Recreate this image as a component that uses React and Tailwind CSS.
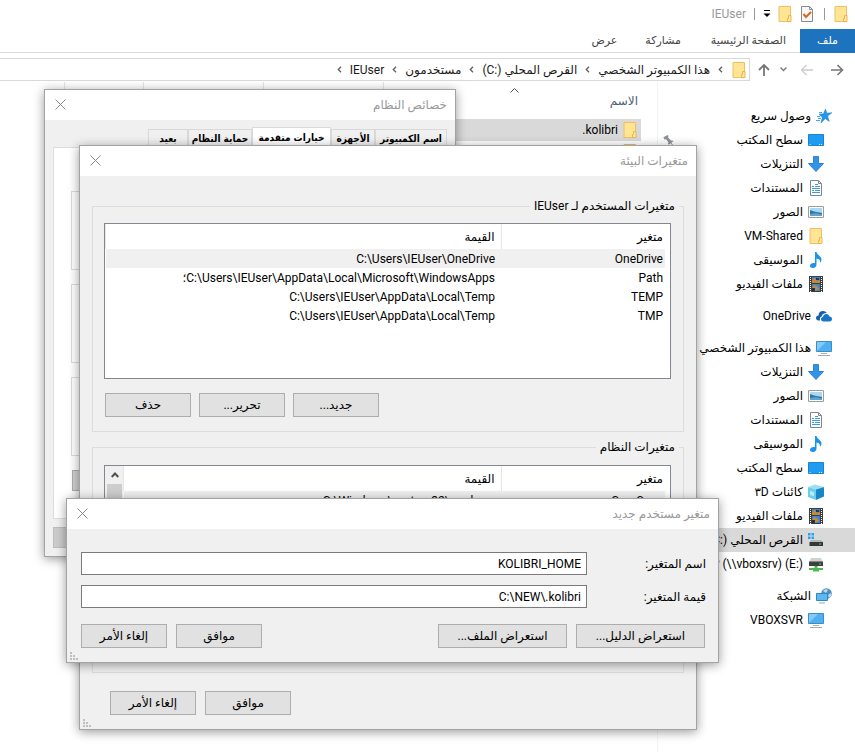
import React from "react";

const Folder = () => (
  <svg width="16" height="16" viewBox="0 0 16 16" className="shrink-0">
    <path d="M2 .5h11.5v15H2z" fill="#ffe594" stroke="#f0bf63" />
    <path d="M11.5 9.5h2.5v6h-3.5v-3h1z" fill="#ffe9a2" stroke="#eeb54f" />
  </svg>
);
const Star = () => (
  <svg width="16" height="16" viewBox="0 0 16 16" className="shrink-0">
    <path d="M9.500 1l1.300 4.200 5-.4-4.200 3.300 1.600 5.400L9.300 10.500 5 15l1.300-5.500L3 6.300l4.500-.6z" fill="#2196ec" stroke="#2b86d0" strokeWidth=".6" />
    <path d="M1 8.500h3M2 10.500h3M0 12.500h4M3 4.500h3" stroke="#4aa5e8" />
  </svg>
);
const Desktop = () => (
  <svg width="16" height="16" viewBox="0 0 16 16" className="shrink-0">
    <path d="M.5 2.500h15v11H.5z" fill="#1f9bf0" stroke="#1a82d2" />
    <path d="M1.500 12.500h1M11 12.500h1M13 12.500h1" stroke="#d5edfd" />
  </svg>
);
const Down = () => (
  <svg width="16" height="16" viewBox="0 0 16 16" className="shrink-0">
    <path d="M5.500.5h5v7h5L8 15.500.5 7.500h5z" fill="#3393e4" stroke="#2b83d3" />
  </svg>
);
const Doc = () => (
  <svg width="16" height="16" viewBox="0 0 16 16" className="shrink-0">
    <path d="M2.500.5h8l3 3v12h-11z" fill="#fff" stroke="#7d8791" />
    <path d="M10.500.5v3h3" fill="none" stroke="#7d8791" />
    <path d="M7 4.500h3M4 6.500h2M7 6.500h5M4 8.500h8M4 10.500h2M7 10.500h5M4 12.500h8" stroke="#3c98dc" />
  </svg>
);
const Picture = () => (
  <svg width="16" height="16" viewBox="0 0 16 16" className="shrink-0">
    <path d="M.5 2.500h15v11H.5z" fill="#fff" stroke="#9a9da0" />
    <path d="M2 4h12v8H2z" fill="#a9d8f5" />
    <path d="M2 6l4 1.500L14 9v3H2z" fill="#35749b" />
    <path d="M2 10l6-1 6 1.500V12H2z" fill="#5aa5d0" />
  </svg>
);
const Music = () => (
  <svg width="16" height="16" viewBox="0 0 16 16" className="shrink-0">
    <path d="M7 0h1.500c.5 3 5 4 5 7.500 0 1.500-.7 2.500-1.500 3.300.3-2.800-1-3.800-3.500-4.300v6C8.500 14.500 7 16 5 16s-3-1-3-2.300C2 12 4 10.700 7 11z" fill="#1b94ea" />
  </svg>
);
const Film = () => (
  <svg width="16" height="16" viewBox="0 0 16 16" className="shrink-0">
    <path d="M1 0h14v16H1z" fill="#3c3c3c" />
    <path d="M2.500 1v15M13.500 1v15" stroke="#fff" strokeDasharray="1 1" />
    <path d="M4 1h8v6H4zM4 8h8v7H4z" fill="#3d86d2" />
    <path d="M4 4l3-2 2 3 3-1v3H4zM6 9l3 1 2 3-4 2-3-2z" fill="#c98a35" />
    <path d="M8 2h3v2H8zM4 12h3v3H4z" fill="#22354f" />
  </svg>
);
const Cloud = () => (
  <svg width="16" height="16" viewBox="0 0 16 16" className="shrink-0">
    <path d="M4 12.500H2.500C1 12.500 0 11.500 0 10s1-2.500 2.500-2.600C2.500 4.500 4.500 3 7 3c1.700 0 3 .8 3.800 2C7.500 5 6 6.500 5.600 8.500 4 9 3.500 10.500 4 12.500z" fill="#1460ab" />
    <path d="M7.500 13.500C6 13.500 5 12.600 5 11.300s1-2 2-2.200C7.200 7.200 8.600 6 10.300 6c1.600 0 2.700 1 3.100 2.500C15 8.600 16 9.700 16 11s-1 2.500-2.400 2.500z" fill="#1a74c6" />
  </svg>
);
const Computer = () => (
  <svg width="16" height="16" viewBox="0 0 16 16" className="shrink-0">
    <path d="M.5 1.500h15v10H.5z" fill="#4fb0f1" stroke="#3c8dc6" />
    <path d="M1 11V2h9z" fill="#84caf8" />
    <path d="M5 13.500h6M2 15.500h12" stroke="#a3abb1" />
  </svg>
);
const Cube = () => (
  <svg width="16" height="16" viewBox="0 0 16 16" className="shrink-0">
    <path d="M0 3l7-2.500L16 3l-8 2.500z" fill="#9be0f3" />
    <path d="M0 3l8 2.500V16l-8-3z" fill="#6acdea" />
    <path d="M8 5.500L16 3v9.500L8 16z" fill="#1987c7" />
    <path d="M2 7l4 1v4l-4-1z" fill="#b8ecf8" />
  </svg>
);
const Drive = () => (
  <svg width="16" height="16" viewBox="0 0 16 16" className="shrink-0">
    <path d="M0 1h2.500v2.500H0zM3.500 1H6v2.500H3.500zM0 4.500h2.500V7H0zM3.500 4.500H6V7H3.500z" fill="#27a3ee" />
    <path d="M3 8h10l2 2H1.500z" fill="#b4b7b9" />
    <path d="M1.500 10H15v4H1.500z" fill="#353838" />
    <path d="M11 12h2" stroke="#55d65b" />
  </svg>
);
const NetDrive = () => (
  <svg width="16" height="16" viewBox="0 0 16 16" className="shrink-0">
    <path d="M3 2h10l2 4H1z" fill="#cfd2d3" />
    <path d="M1 5.500h14V10H1z" fill="#3c3f3f" />
    <path d="M11 8h2" stroke="#55d65b" />
    <path d="M6.500 10h3v2H15v2h-4v1.500H5V14H1v-2h5.500z" fill="#4fb853" />
  </svg>
);
const Network = () => (
  <svg width="16" height="16" viewBox="0 0 16 16" className="shrink-0">
    <circle cx="10.500" cy="5.500" r="5.300" fill="#4d92bd" />
    <path d="M7 3c2-2 4-2 5-1l-2 3zM12 7l3-2v3l-2 2z" fill="#bcdcec" />
    <path d="M.5 5.500h11v7H.5z" fill="#5cb7f3" stroke="#2f86c6" />
    <path d="M3 15h6" stroke="#a3abb1" />
  </svg>
);
const Pin = () => (
  <svg width="12" height="12" viewBox="0 0 12 12" className="shrink-0">
    <path d="M1 4l4-3 1 1-.3 1.500L9 6l1.500-.2 1 .8-4 4-1-1 .2-1.500L4 5.500 2.500 6z" fill="#8d9297" transform="rotate(8 6 6)" />
    <path d="M8 8l3 3.500" stroke="#8d9297" />
  </svg>
);
const Crumb = () => (
  <svg width="5" height="7" viewBox="0 0 5 7" className="shrink-0">
    <path d="M4 .8L1.300 3.500 4 6.200" fill="none" stroke="#5f5f5f" strokeWidth="1.300" />
  </svg>
);

const places = [
  { icon: Star, text: "وصول سريع", top: true },
  { icon: Desktop, text: "سطح المكتب", pin: true },
  { icon: Down, text: "التنزيلات" },
  { icon: Doc, text: "المستندات" },
  { icon: Picture, text: "الصور" },
  { icon: Folder, text: "VM-Shared" },
  { icon: Music, text: "الموسيقى" },
  { icon: Film, text: "ملفات الفيديو" },
  { icon: Cloud, text: "OneDrive", top: true, gap: true },
  { icon: Computer, text: "هذا الكمبيوتر الشخصي", top: true, gap: true },
  { icon: Down, text: "التنزيلات" },
  { icon: Picture, text: "الصور" },
  { icon: Doc, text: "المستندات" },
  { icon: Music, text: "الموسيقى" },
  { icon: Desktop, text: "سطح المكتب" },
  { icon: Cube, text: "كائنات ٣D" },
  { icon: Film, text: "ملفات الفيديو" },
  { icon: Drive, text: "القرص المحلي", ltr: "(C:)", active: true },
  { icon: NetDrive, ltr: "P (\\\\vboxsrv) (E:)" },
  { icon: Network, text: "الشبكة", top: true, gap: true },
  { icon: Computer, text: "VBOXSVR" },
];

function Sidebar() {
  return (
    <nav className="w-[198px] shrink-0 border-l border-[#f3f3f3] pt-[22px]">
      <ul>
        {places.map((p, i) => (
          <li key={i} className={p.gap ? "mt-2" : ""}>
            <a
              href="#"
              className={`flex h-6 items-center gap-[5px] whitespace-nowrap ${p.top ? "pr-[23px]" : "pr-[31px]"} ${p.active ? "bg-[#d9d9d9]" : ""}`}
            >
              <p.icon />
              <span>
                {p.text} {p.ltr && <bdi dir="ltr">{p.ltr}</bdi>}
              </span>
              {p.pin && (
                <span className="mr-auto pl-1">
                  <Pin />
                </span>
              )}
            </a>
          </li>
        ))}
      </ul>
    </nav>
  );
}

function Explorer() {
  return (
    <div className="flex min-h-screen flex-col">
      <header>
        <div className="flex h-[29px] items-center pr-[6px] pb-px text-[#999]">
          <Folder />
          <span className="mx-2 h-3 w-px bg-[#9a9a9a]" />
          <button aria-label="خصائص" className="mr-px">
            <svg width="16" height="16" viewBox="0 0 16 16">
              <path d="M2.500.5h8l3 3v12h-11z" fill="#f7f7f7" stroke="#8a8a8a" />
              <path d="M10.500.5v3h3" fill="none" stroke="#8a8a8a" />
              <path d="M4.500 8l2.500 3 5-5" fill="none" stroke="#d2691e" strokeWidth="2" />
            </svg>
          </button>
          <button aria-label="مجلد جديد" className="mr-[6px]">
            <Folder />
          </button>
          <button aria-label="تخصيص" className="mr-[6px]">
            <svg width="8" height="8" viewBox="0 0 8 8">
              <path d="M1 .5h6" stroke="#000" />
              <path d="M.5 3.500h7L4 7z" fill="#000" />
            </svg>
          </button>
          <span className="mx-2 h-3 w-px bg-[#9a9a9a]" />
          <span>IEUser</span>
        </div>
        <div className="flex h-6 items-center border-b border-[#dadbdc] text-[11px] text-[#444]">
          <button className="h-6 w-[55px] bg-[#1e73be] text-white">ملف</button>
          <button className="mr-[14px]">الصفحة الرئيسية</button>
          <button className="mr-[30px]">مشاركة</button>
          <button className="mr-[28px]">عرض</button>
        </div>
        <div className="mt-[5px] flex h-[23px] items-center">
          <div className="flex w-[105px] shrink-0 items-center gap-[10px] pr-[11px]">
            <button aria-label="الخلف">
              <svg width="14" height="12" viewBox="0 0 14 12">
                <path d="M1 6h11M7.500 1l5 5-5 5" fill="none" stroke="#777" strokeWidth="1.600" />
              </svg>
            </button>
            <button aria-label="الأمام" className="mr-[6px]">
              <svg width="14" height="12" viewBox="0 0 14 12">
                <path d="M13 6H2M6.500 1l-5 5 5 5" fill="none" stroke="#ccc" strokeWidth="1.300" />
              </svg>
            </button>
            <button aria-label="المواقع الأخيرة" className="mr-[3px]">
              <svg width="7" height="5" viewBox="0 0 7 5">
                <path d="M.5.5l3 3 3-3" fill="none" stroke="#777" strokeWidth="1.300" />
              </svg>
            </button>
            <button aria-label="أعلى">
              <svg width="12" height="13" viewBox="0 0 12 13">
                <path d="M6 13V2M1 7l5-5 5 5" fill="none" stroke="#777" strokeWidth="1.800" />
              </svg>
            </button>
          </div>
          <div className="flex h-[23px] grow items-center gap-2 border-y border-r border-[#d9d9d9] pr-[2px] whitespace-nowrap text-[#1a1a1a]">
            <Folder />
            <Crumb />
            <a href="#">هذا الكمبيوتر الشخصي</a>
            <Crumb />
            <a href="#">
              القرص المحلي <bdi dir="ltr">(C:)</bdi>
            </a>
            <Crumb />
            <a href="#">مستخدمون</a>
            <Crumb />
            <a href="#">IEUser</a>
            <Crumb />
          </div>
        </div>
      </header>
      <div className="mt-px flex grow">
        <Sidebar />
        <main className="w-[593px] pr-4">
          <div className="flex h-[37px] text-[#4c607a]">
            <div className="flex w-[257px] flex-col pr-[3px]">
              <svg width="9" height="5" viewBox="0 0 9 5" className="mt-[6px] mr-[119px]">
                <path d="M.5 4.500l4-4 4 4" fill="none" stroke="#555" />
              </svg>
              <span className="leading-4">الاسم</span>
            </div>
            <div className="w-[120px] border-r border-[#e5e5e5]" />
            <div className="w-[120px] border-r border-[#e5e5e5]" />
            <div className="w-20 border-x border-[#e5e5e5]" />
          </div>
          <div className="flex h-[22px] items-center gap-1 bg-[#d9d9d9] pr-[3px]">
            <Folder />
            <bdi dir="ltr">.kolibri</bdi>
          </div>
          <div className="flex h-[22px] items-center pr-[3px]">
            <Folder />
          </div>
        </main>
      </div>
    </div>
  );
}

function Dialog({ title, className, children, grip }) {
  return (
    <section
      role="dialog"
      aria-label={title}
      className={`absolute flex flex-col border border-[#a3a3a3] bg-[#f0f0f0] shadow-[0_2px_10px_rgba(0,0,0,0.4)] ${className}`}
    >
      <div className="flex h-[30px] shrink-0 items-center justify-between bg-white pr-2 pb-px pl-[10px] text-[#999]">
        <h2>{title}</h2>
        <button aria-label="إغلاق">
          <svg width="11" height="11" viewBox="0 0 11 11">
            <path d="M.5.5l10 10M10.500.5l-10 10" stroke="#8b8b8b" />
          </svg>
        </button>
      </div>
      {children}
      {grip && (
        <svg width="8" height="8" viewBox="0 0 8 8" className="absolute bottom-[2px] left-[3px]">
          <path d="M0 0h2v2H0zM0 3h2v2H0zM3 3h2v2H3zM0 6h2v2H0zM3 6h2v2H3zM6 6h2v2H6z" fill="#bfbfbf" />
        </svg>
      )}
    </section>
  );
}

function Btn({ children, wide }) {
  return (
    <button className={`h-6 border border-[#adadad] bg-[#e1e1e1] ${wide ? "w-[129px]" : "w-[86px]"}`}>
      {children}
    </button>
  );
}

function VarTable({ rows, scroll }) {
  return (
    <div className="flex grow overflow-hidden border border-[#828790] bg-white pr-[5px]">
      <table className="w-full table-fixed self-start">
        <thead>
          <tr className="h-[25px]">
            <th className="w-[164px] border-l border-[#e5e5e5] pr-[2px] text-right font-normal">متغير</th>
            <th className="border-l border-[#e5e5e5] pr-[6px] text-right font-normal">القيمة</th>
          </tr>
        </thead>
        <tbody>
          {rows.map(([name, value], i) => (
            <tr key={name} className={`h-[19px] ${i === 0 ? "bg-[#f0f0f0]" : ""}`}>
              <td className="p-0 pr-[2px] leading-4">{name}</td>
              <td className="p-0 pr-[6px] leading-4">{value}</td>
            </tr>
          ))}
        </tbody>
      </table>
      {scroll && (
        <div className="flex w-[18px] shrink-0 flex-col bg-[#f0f0f0] pr-px pl-[2px]">
          <button aria-label="تمرير لأعلى" className="flex h-[18px] shrink-0 items-center justify-center">
            <svg width="8" height="6" viewBox="0 0 8 6">
              <path d="M.7 5L4 1.500 7.300 5" fill="none" stroke="#505050" strokeWidth="2" />
            </svg>
          </button>
          <div className="h-20 bg-[#cdcdcd]" />
        </div>
      )}
    </div>
  );
}

const userVars = [
  ["OneDrive", "C:\\Users\\IEUser\\OneDrive"],
  ["Path", "C:\\Users\\IEUser\\AppData\\Local\\Microsoft\\WindowsApps؛"],
  ["TEMP", "C:\\Users\\IEUser\\AppData\\Local\\Temp"],
  ["TMP", "C:\\Users\\IEUser\\AppData\\Local\\Temp"],
];
const systemVars = [["ComSpec", "C:\\Windows\\system32\\cmd.exe"]];
const tabs = [
  ["اسم الكمبيوتر", "w-[72px]"],
  ["الأجهزة", "w-[44px]"],
  ["خيارات متقدمة", "w-[79px]"],
  ["حماية النظام", "w-[64px]"],
  ["بعيد", "w-[40px]"],
];

export default function App() {
  return (
    <div
      dir="rtl"
      className="relative min-h-screen overflow-hidden bg-white font-['Roboto','DejaVu_Sans',sans-serif] text-[12px] leading-4 text-black"
    >
      <Explorer />

      <Dialog title="خصائص النظام" className="top-[89px] right-[399px] h-[468px] w-[412px]">
        <div className="flex grow flex-col px-2 pt-[7px] pb-2">
          <div role="tablist" className="flex h-5 items-end font-['DejaVu_Sans_Condensed','DejaVu_Sans',sans-serif] text-[10px] font-bold">
            {tabs.map(([t, w], i) => (
              <button
                key={t}
                role="tab"
                aria-selected={i === 2}
                className={`border border-b-0 border-[#d9d9d9] whitespace-nowrap ${w} ${i === 2 ? "h-5 bg-white" : "h-[18px]"}`}
              >
                {t}
              </button>
            ))}
          </div>
          <div className="flex grow flex-col gap-[14px] border border-[#dcdcdc] bg-white px-[17px] pt-[43px]">
            <div className="h-[79px] border border-[#dcdcdc]" />
            <div className="h-[79px] border border-[#dcdcdc]" />
            <div className="h-[79px] border border-[#dcdcdc]" />
            <div className="flex h-[21px] justify-end pl-px">
              <button aria-label="متغيرات البيئة" className="w-32 border border-[#adadad] bg-[#d0d0d0]" />
            </div>
            <div className="h-[13px]" />
          </div>
          <div className="mt-2 flex h-[21px] justify-end">
            <button aria-label="تطبيق" className="w-[86px] border border-[#bdbdbd] bg-[#cccccc]" />
          </div>
        </div>
      </Dialog>

      <Dialog title="متغيرات البيئة" grip className="top-[145px] right-[158px] h-[585px] w-[618px]">
        <div className="flex grow flex-col px-3 pt-[22px]">
          <fieldset className="flex h-[234px] flex-col border border-[#dcdcdc] pr-3 pl-[11px]">
            <legend className="mr-[-8px] px-1">
              متغيرات المستخدم لـ <bdi>IEUser</bdi>
            </legend>
            <div className="mt-[9px] flex h-[156px]">
              <VarTable rows={userVars} />
            </div>
            <div className="mt-[14px] flex justify-end gap-2 pl-px">
              <Btn>جديد...</Btn>
              <Btn>تحرير...</Btn>
              <Btn>حذف</Btn>
            </div>
          </fieldset>
          <fieldset className="mt-[7px] flex h-[234px] flex-col border border-[#dcdcdc] pr-3 pl-[11px]">
            <legend className="mr-[-8px] px-1">متغيرات النظام</legend>
            <div className="mt-[10px] flex h-[156px]">
              <VarTable rows={systemVars} scroll />
            </div>
          </fieldset>
          <div className="mt-[18px] flex justify-end gap-[9px] pl-[18px]">
            <Btn>موافق</Btn>
            <Btn>إلغاء الأمر</Btn>
          </div>
        </div>
      </Dialog>

      <Dialog title="متغير مستخدم جديد" grip className="top-[498px] right-[136px] h-[165px] w-[653px]">
        <form className="flex flex-col gap-[10px] pt-[23px] pr-3 pl-[14px]">
          <div className="flex items-center">
            <label htmlFor="var-name" className="w-[119px]">
              اسم المتغير:
            </label>
            <input
              id="var-name"
              dir="ltr"
              defaultValue="KOLIBRI_HOME"
              className="h-[23px] min-w-0 grow border border-[#7a7a7a] bg-white px-[5px] text-right"
            />
          </div>
          <div className="flex items-center">
            <label htmlFor="var-value" className="w-[119px]">
              قيمة المتغير:
            </label>
            <input
              id="var-value"
              dir="ltr"
              defaultValue={"C:\\NEW\\.kolibri"}
              className="h-[23px] min-w-0 grow border border-[#7a7a7a] bg-white px-[5px] text-right"
            />
          </div>
          <div className="mt-[6px] flex gap-[9px] pr-px">
            <Btn wide>استعراض الدليل...</Btn>
            <Btn wide>استعراض الملف...</Btn>
            <span className="grow" />
            <Btn>موافق</Btn>
            <Btn>إلغاء الأمر</Btn>
          </div>
        </form>
      </Dialog>
    </div>
  );
}
